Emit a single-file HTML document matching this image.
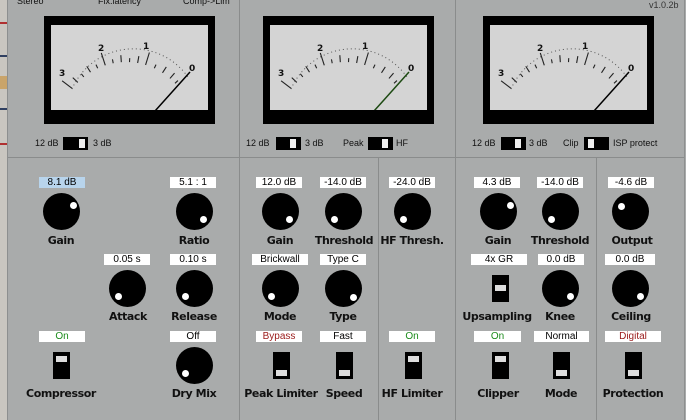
<!DOCTYPE html>
<html><head><meta charset="utf-8"><style>
*{margin:0;padding:0;box-sizing:border-box}
body{width:686px;height:420px;overflow:hidden;background:#a9abab;font-family:"Liberation Sans",Arial,sans-serif;position:relative}
.a{position:absolute}
.t{position:absolute;font-size:9px;color:#111;white-space:nowrap}
.v{position:absolute;background:#fff;height:11px;font-size:10px;line-height:11px;text-align:center;color:#000}
.l{position:absolute;font-size:11px;font-weight:bold;color:#111;text-align:center;width:90px;font-family:"DejaVu Sans",sans-serif;letter-spacing:-0.4px}
.k{position:absolute;width:37px;height:37px;border-radius:50%;background:#000}
.k i{position:absolute;width:7px;height:7px;border-radius:50%;background:#fff}
.s{position:absolute;width:17px;height:27px;background:#000}
.s i{position:absolute;left:3px;width:11px;height:6px;background:#ddd}
.m{position:absolute;width:171px;height:108px;background:#000;top:16px}
.m svg{position:absolute;left:7px;top:9px}
.sw{position:absolute;width:25px;height:13px;background:#000;top:137px}
.sw i{position:absolute;top:2px;width:6px;height:9px;background:#eee}
.ln{position:absolute;background:#8a8c8c}
</style></head><body>
<div class="a" style="left:0;top:0;width:7px;height:420px;background:#c9c6c0"></div>
<div class="a" style="left:0;top:76px;width:7px;height:13px;background:#c9a46a"></div>
<div class="a" style="left:0;top:22px;width:7px;height:2px;background:#b03030"></div>
<div class="a" style="left:0;top:55px;width:7px;height:2px;background:#304060"></div>
<div class="a" style="left:0;top:108px;width:7px;height:2px;background:#304060"></div>
<div class="a" style="left:0;top:143px;width:7px;height:2px;background:#b03030"></div>
<div class="a" style="left:7px;top:0;width:1px;height:420px;background:#8d8f8f"></div>
<div class="a" style="left:684px;top:0;width:1px;height:420px;background:#8d8f8f"></div>

<div class="ln" style="left:8px;top:157px;width:676px;height:1px"></div>
<div class="ln" style="left:239px;top:0;width:1px;height:420px"></div>
<div class="ln" style="left:455px;top:0;width:1px;height:420px"></div>
<div class="ln" style="left:378px;top:158px;width:1px;height:262px"></div>
<div class="ln" style="left:596px;top:158px;width:1px;height:262px"></div>

<div class="t" style="left:17px;top:-4px">Stereo</div>
<div class="t" style="left:98px;top:-4px">Fix.latency</div>
<div class="t" style="left:183px;top:-4px">Comp-&gt;Lim</div>
<div class="t" style="left:649px;top:0px;color:#333">v1.0.2b</div>

<svg width="0" height="0" style="position:absolute"><defs>
<g id="face">
<rect width="157" height="85" fill="#d4d4d4"/>
<g stroke="#222" stroke-width="1.1">
<line x1="75" y1="37" x2="75" y2="24" transform="rotate(-53 75 104)"/>
<line x1="75" y1="37" x2="75" y2="24" transform="rotate(-18 75 104)"/>
<line x1="75" y1="37" x2="75" y2="24" transform="rotate(17 75 104)"/>
<line x1="75" y1="37" x2="75" y2="30" transform="rotate(-46 75 104)"/>
<line x1="75" y1="37" x2="75" y2="33" transform="rotate(-39 75 104)"/>
<line x1="75" y1="37" x2="75" y2="30" transform="rotate(-32 75 104)"/>
<line x1="75" y1="37" x2="75" y2="33" transform="rotate(-25 75 104)"/>
<line x1="75" y1="37" x2="75" y2="33" transform="rotate(-11 75 104)"/>
<line x1="75" y1="37" x2="75" y2="30" transform="rotate(-4 75 104)"/>
<line x1="75" y1="37" x2="75" y2="33" transform="rotate(3 75 104)"/>
<line x1="75" y1="37" x2="75" y2="30" transform="rotate(10 75 104)"/>
<line x1="75" y1="37" x2="75" y2="33" transform="rotate(25 75 104)"/>
<line x1="75" y1="37" x2="75" y2="30" transform="rotate(33 75 104)"/>
<line x1="75" y1="37" x2="75" y2="30" transform="rotate(41 75 104)"/>
<line x1="75" y1="37" x2="75" y2="33" transform="rotate(47 75 104)"/>
</g>
<path d="M21 64 A67 67 0 0 1 137 52" fill="none" stroke="#555" stroke-width="1" stroke-dasharray="1 3"/>
<g font-family="DejaVu Sans,sans-serif" font-size="9" font-weight="bold" fill="#111">
<text x="8" y="51">3</text><text x="47" y="26">2</text><text x="92" y="24">1</text><text x="138" y="46">0</text>
</g></g></defs></svg>

<div class="m" style="left:44px"><svg width="157" height="85"><use href="#face"/><line x1="104" y1="86" x2="139" y2="47" stroke="#000" stroke-width="1.5"/></svg></div>
<div class="m" style="left:263px"><svg width="157" height="85"><use href="#face"/><line x1="104" y1="86" x2="139" y2="47" stroke="#1d4a12" stroke-width="1.5"/></svg></div>
<div class="m" style="left:483px"><svg width="157" height="85"><use href="#face"/><line x1="104" y1="86" x2="139" y2="47" stroke="#000" stroke-width="1.5"/></svg></div>

<div class="t" style="left:35px;top:138px">12 dB</div><div class="sw" style="left:63px"><i style="left:16px"></i></div><div class="t" style="left:93px;top:138px">3 dB</div>
<div class="t" style="left:246px;top:138px">12 dB</div><div class="sw" style="left:276px"><i style="left:14px"></i></div><div class="t" style="left:305px;top:138px">3 dB</div>
<div class="t" style="left:343px;top:138px">Peak</div><div class="sw" style="left:368px"><i style="left:14px"></i></div><div class="t" style="left:396px;top:138px">HF</div>
<div class="t" style="left:472px;top:138px">12 dB</div><div class="sw" style="left:501px"><i style="left:14px"></i></div><div class="t" style="left:529px;top:138px">3 dB</div>
<div class="t" style="left:563px;top:138px">Clip</div><div class="sw" style="left:584px"><i style="left:4px"></i></div><div class="t" style="left:613px;top:138px">ISP protect</div>

<div class="v" style="left:39px;top:177px;width:46px;background:#b8d4ec">8.1 dB</div>
<div class="k" style="left:43px;top:193px"><i style="left:27px;top:9px"></i></div><div class="l" style="left:16px;top:234px">Gain</div>
<div class="v" style="left:170px;top:177px;width:46px">5.1 : 1</div>
<div class="k" style="left:176px;top:193px"><i style="left:24px;top:23px"></i></div><div class="l" style="left:149px;top:234px">Ratio</div>

<div class="v" style="left:256px;top:177px;width:46px">12.0 dB</div>
<div class="k" style="left:262px;top:193px"><i style="left:24px;top:23px"></i></div><div class="l" style="left:235px;top:234px">Gain</div>
<div class="v" style="left:320px;top:177px;width:46px">-14.0 dB</div>
<div class="k" style="left:325px;top:193px"><i style="left:6px;top:23px"></i></div><div class="l" style="left:299px;top:234px">Threshold</div>
<div class="v" style="left:389px;top:177px;width:46px">-24.0 dB</div>
<div class="k" style="left:394px;top:193px"><i style="left:6px;top:23px"></i></div><div class="l" style="left:367px;top:234px">HF Thresh.</div>

<div class="v" style="left:474px;top:177px;width:46px">4.3 dB</div>
<div class="k" style="left:480px;top:193px"><i style="left:27px;top:9px"></i></div><div class="l" style="left:453px;top:234px">Gain</div>
<div class="v" style="left:537px;top:177px;width:46px">-14.0 dB</div>
<div class="k" style="left:542px;top:193px"><i style="left:6px;top:23px"></i></div><div class="l" style="left:515px;top:234px">Threshold</div>
<div class="v" style="left:608px;top:177px;width:46px">-4.6 dB</div>
<div class="k" style="left:612px;top:193px"><i style="left:6px;top:10px"></i></div><div class="l" style="left:587px;top:234px">Output</div>

<div class="v" style="left:104px;top:254px;width:46px">0.05 s</div>
<div class="k" style="left:109px;top:270px"><i style="left:6px;top:23px"></i></div><div class="l" style="left:83px;top:310px">Attack</div>
<div class="v" style="left:170px;top:254px;width:46px">0.10 s</div>
<div class="k" style="left:176px;top:270px"><i style="left:6px;top:23px"></i></div><div class="l" style="left:149px;top:310px">Release</div>

<div class="v" style="left:252px;top:254px;width:56px">Brickwall</div>
<div class="k" style="left:262px;top:270px"><i style="left:6px;top:23px"></i></div><div class="l" style="left:235px;top:310px">Mode</div>
<div class="v" style="left:320px;top:254px;width:46px">Type C</div>
<div class="k" style="left:325px;top:270px"><i style="left:25px;top:24px"></i></div><div class="l" style="left:298px;top:310px">Type</div>

<div class="v" style="left:471px;top:254px;width:56px">4x GR</div>
<div class="s" style="left:492px;top:275px"><i style="top:10px"></i></div><div class="l" style="left:452px;top:310px">Upsampling</div>
<div class="v" style="left:538px;top:254px;width:46px">0.0 dB</div>
<div class="k" style="left:542px;top:270px"><i style="left:25px;top:23px"></i></div><div class="l" style="left:515px;top:310px">Knee</div>
<div class="v" style="left:605px;top:254px;width:50px">0.0 dB</div>
<div class="k" style="left:612px;top:270px"><i style="left:25px;top:23px"></i></div><div class="l" style="left:586px;top:310px">Ceiling</div>

<div class="v" style="left:39px;top:331px;width:46px;color:#1a8a1a">On</div>
<div class="s" style="left:53px;top:352px"><i style="top:4px"></i></div><div class="l" style="left:16px;top:387px">Compressor</div>
<div class="v" style="left:170px;top:331px;width:46px">Off</div>
<div class="k" style="left:176px;top:347px"><i style="left:6px;top:23px"></i></div><div class="l" style="left:149px;top:387px">Dry Mix</div>

<div class="v" style="left:256px;top:331px;width:46px;color:#9a1a1a">Bypass</div>
<div class="s" style="left:273px;top:352px"><i style="top:18px"></i></div><div class="l" style="left:236px;top:387px">Peak Limiter</div>
<div class="v" style="left:320px;top:331px;width:46px">Fast</div>
<div class="s" style="left:336px;top:352px"><i style="top:18px"></i></div><div class="l" style="left:299px;top:387px">Speed</div>
<div class="v" style="left:389px;top:331px;width:46px;color:#1a8a1a">On</div>
<div class="s" style="left:405px;top:352px"><i style="top:4px"></i></div><div class="l" style="left:367px;top:387px">HF Limiter</div>

<div class="v" style="left:474px;top:331px;width:47px;color:#1a8a1a">On</div>
<div class="s" style="left:492px;top:352px"><i style="top:4px"></i></div><div class="l" style="left:453px;top:387px">Clipper</div>
<div class="v" style="left:534px;top:331px;width:55px">Normal</div>
<div class="s" style="left:553px;top:352px"><i style="top:18px"></i></div><div class="l" style="left:516px;top:387px">Mode</div>
<div class="v" style="left:605px;top:331px;width:56px;color:#9a1a1a">Digital</div>
<div class="s" style="left:625px;top:352px"><i style="top:18px"></i></div><div class="l" style="left:588px;top:387px">Protection</div>
</body></html>
